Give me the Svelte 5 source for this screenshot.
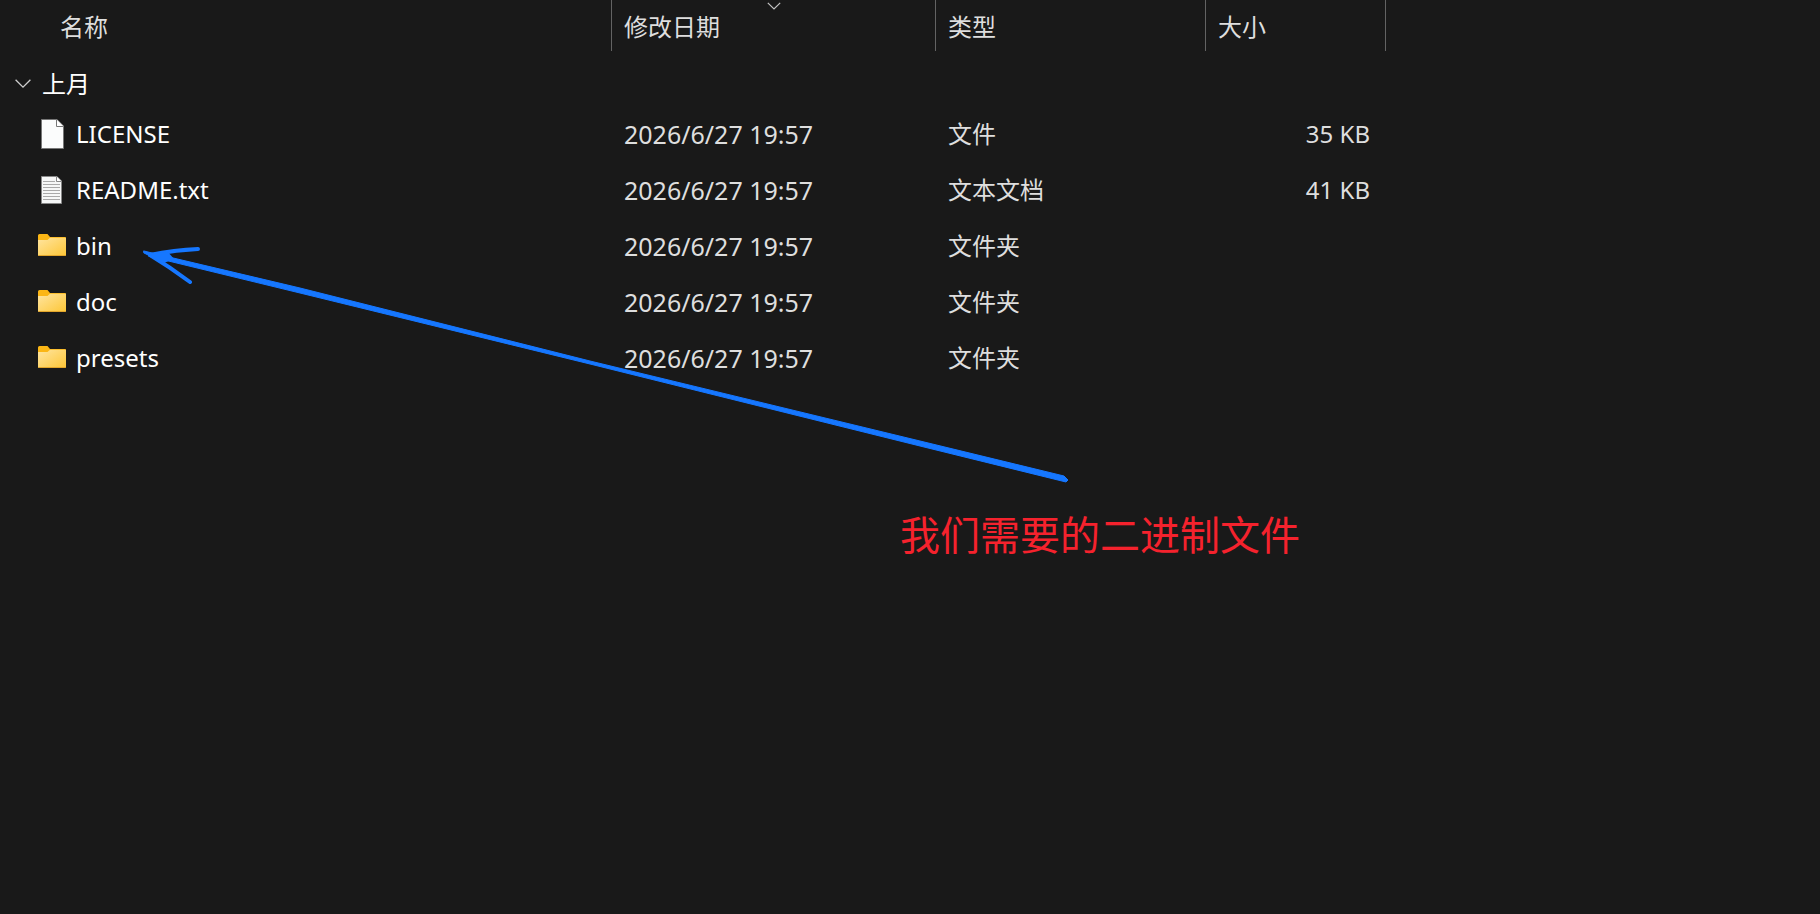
<script lang="ts">
	interface Entry {
		name: string;
		icon: 'file' | 'text' | 'folder';
		modified: string;
		type: string;
		size: string;
	}

	const columns = [
		{ key: 'name', label: '名称' },
		{ key: 'modified', label: '修改日期' },
		{ key: 'type', label: '类型' },
		{ key: 'size', label: '大小' }
	];

	const entries: Entry[] = [
		{ name: 'LICENSE', icon: 'file', modified: '2026/6/27 19:57', type: '文件', size: '35 KB' },
		{ name: 'README.txt', icon: 'text', modified: '2026/6/27 19:57', type: '文本文档', size: '41 KB' },
		{ name: 'bin', icon: 'folder', modified: '2026/6/27 19:57', type: '文件夹', size: '' },
		{ name: 'doc', icon: 'folder', modified: '2026/6/27 19:57', type: '文件夹', size: '' },
		{ name: 'presets', icon: 'folder', modified: '2026/6/27 19:57', type: '文件夹', size: '' }
	];

	let sortKey = $state('modified');
	let isOpen = $state(true);
</script>

<main class="explorer">
	<table>
		<colgroup>
			<col class="col-name" />
			<col class="col-modified" />
			<col class="col-type" />
			<col class="col-size" />
			<col />
		</colgroup>
		<thead>
			<tr>
				{#each columns as column (column.key)}
					<th scope="col" class={column.key}>
						<button type="button" class="header-button" onclick={() => (sortKey = column.key)}>
							{column.label}
							{#if sortKey === column.key}
								<svg class="sort" width="14" height="8" viewBox="0 0 14 8" aria-hidden="true">
									<path d="M.8 .8 7 7 13.2 .8" fill="none" stroke="#c4c4c4" stroke-width="1.2" />
								</svg>
							{/if}
						</button>
					</th>
				{/each}
				<td></td>
			</tr>
		</thead>
		<tbody>
			<tr class="group">
				<th colspan="5" scope="rowgroup">
					<button type="button" class="group-button" aria-expanded={isOpen} onclick={() => (isOpen = !isOpen)}>
						<svg class="chevron" class:closed={!isOpen} width="16" height="10" viewBox="0 0 16 10" aria-hidden="true">
							<path d="M.6 .8 8 8.2 15.4 .8" fill="none" stroke="#cfcfcf" stroke-width="1.3" />
						</svg>
						上月
					</button>
				</th>
			</tr>
			{#if isOpen}
				{#each entries as entry (entry.name)}
					<tr class="entry">
						<td>
							<div class="entry-name">
								<svg class="icon" width="28" height="32" viewBox="0 0 28 32" aria-hidden="true">
									{#if entry.icon === 'file'}
										<path d="M3.5 1.5H19L25.5 8V30.5H3.5Z" fill="#fbfcfc" stroke="#777" />
										<path d="M18.5 1.5V8.5H25.5" fill="#fff" stroke="#777" />
									{:else if entry.icon === 'text'}
										<path d="M3.5 2.5H19L23.5 7V29.5H3.5Z" fill="#f6f7f7" stroke="#888" />
										<path d="M18.5 2.5V7.5H23.5" fill="#fff" stroke="#888" />
										<path d="M5 7.5H17M5 10.5H22M5 13.5H22M5 16.5H22M5 19.5H22M5 22.5H22M5 25.5H22" stroke="#a9a9a9" />
									{:else}
										<defs>
											<linearGradient id="folder-{entry.name}" x1="0" y1="0" x2="1" y2="1">
												<stop offset="0" stop-color="#ffe5a0" />
												<stop offset="1" stop-color="#fdc636" />
											</linearGradient>
										</defs>
										<path d="M0 5.500Q0 4 1.500 4H9.500L12 7H27Q28 7 28 8V20H0Z" fill="#fbb615" />
										<path d="M0 10H9.500L12 7.800H28V25Q28 26 27 26H1Q0 26 0 25Z" fill="url(#folder-{entry.name})" />
										<path d="M.5 25.5H27.5" stroke="#e3a62b" />
									{/if}
								</svg>
								{entry.name}
							</div>
						</td>
						<td class="date">{entry.modified}</td>
						<td>{entry.type}</td>
						<td class="size">{entry.size}</td>
						<td></td>
					</tr>
				{/each}
			{/if}
		</tbody>
	</table>

	<svg class="arrow" width="932" height="244" viewBox="0 0 932 244" aria-hidden="true">
		<g fill="#1677ff" stroke="#1677ff" stroke-linecap="round" stroke-linejoin="round">
			<path d="M4 8 12 10 160 45 450 118 780 198 924 233 928 237 926 239 780 203 450 121 160 50 12 14 4 10Z" stroke-width="1" />
			<path d="M10 12Q34 7 58 6" fill="none" stroke-width="4" />
			<path d="M10 12Q30 24 50 39" fill="none" stroke-width="4" />
			<path d="M10 10 28 9 34 16 24 20 10 14Z" stroke="none" />
		</g>
	</svg>
	<p class="note">我们需要的二进制文件</p>
</main>

<style>
	:global(body) {
		margin: 0;
		background: #191919;
	}

	.explorer {
		position: relative;
		min-height: 100vh;
		color: #dedede;
		font-family: 'Noto Sans', 'Noto Sans CJK SC', sans-serif;
		font-size: 24px;
		line-height: 32px;
	}

	table {
		width: 100%;
		table-layout: fixed;
		border-collapse: separate;
		border-spacing: 0;
	}

	.col-name {
		width: 612px;
	}

	.col-modified {
		width: 324px;
	}

	.col-type {
		width: 270px;
	}

	.col-size {
		width: 180px;
	}

	th,
	td {
		padding: 0;
		font-weight: 400;
		text-align: left;
	}

	thead th {
		border-right: 1px solid #636363;
	}

	button {
		display: flex;
		align-items: center;
		border: none;
		background: none;
		color: inherit;
		font: inherit;
		cursor: pointer;
	}

	.header-button {
		position: relative;
		width: 100%;
		height: 51px;
		padding: 2px 12px 0;
	}

	.name .header-button {
		padding-left: 60px;
	}

	.sort {
		position: absolute;
		top: 2px;
		left: calc(50% - 7px);
	}

	.group-button {
		gap: 11px;
		height: 55px;
		padding: 11px 15px 0;
		color: #fff;
	}

	.chevron.closed {
		transform: rotate(-90deg);
	}

	.entry td {
		height: 56px;
		padding: 0 12px;
		white-space: nowrap;
	}

	.entry td:first-child {
		padding-left: 38px;
	}

	.entry .date {
		font-size: 25px;
	}

	.entry .size {
		padding-right: 16px;
		text-align: right;
	}

	.entry-name {
		display: flex;
		align-items: center;
		gap: 10px;
		color: #fff;
	}

	.arrow {
		position: absolute;
		top: 243px;
		left: 140px;
		pointer-events: none;
	}

	.note {
		position: absolute;
		top: 505px;
		left: 900px;
		margin: 0;
		color: #f5222d;
		font-family: 'Noto Sans CJK SC', sans-serif;
		font-size: 40px;
		line-height: 56px;
	}
</style>
